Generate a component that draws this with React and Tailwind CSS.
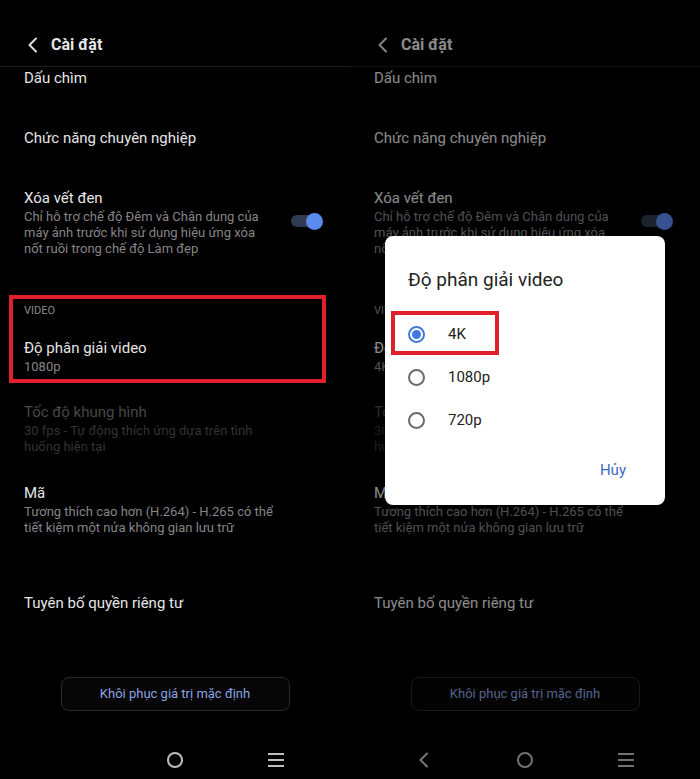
import React from 'react';

const font = { fontFamily: 'Roboto, "Noto Sans", sans-serif' };

const Chevron = ({ className }) => (
  <svg width="12" height="16" viewBox="0 0 12 16" className={className}>
    <path d="M9 1.5 L2.5 8 L9 14.5" fill="none" stroke="currentColor" strokeWidth="2" strokeLinecap="round" strokeLinejoin="round" />
  </svg>
);

const Item = ({ title, desc, mt, titleColor = 'text-[#e6e6e6]', descColor = 'text-[#858585]', children }) => (
  <div className={`flex items-start justify-between pl-[24px] pr-[27px] ${mt}`}>
    <div>
      <div className={`text-[15px] leading-[20px] ${titleColor}`}>{title}</div>
      {desc && <div className={`mt-px text-[13px] leading-[16px] ${descColor}`}>{desc}</div>}
    </div>
    {children}
  </div>
);

const Toggle = () => (
  <div className="relative mt-[25px] h-[16px] w-[32px]">
    <div className="absolute left-0 top-[2px] h-[12px] w-[26px] rounded-full bg-[#2e3b52]" />
    <div className="absolute right-0 top-0 h-[17px] w-[17px] rounded-full bg-[#5a8bef]" />
  </div>
);

const Radio = ({ checked }) =>
  checked ? (
    <div className="flex h-[17px] w-[17px] items-center justify-center rounded-full border-2 border-[#3f78e0]">
      <div className="h-[9px] w-[9px] rounded-full bg-[#3f78e0]" />
    </div>
  ) : (
    <div className="h-[17px] w-[17px] rounded-full border-2 border-[#6a6a6a]" />
  );

const Panel = ({ dialog }) => (
  <div className="relative h-[779px] w-[350px] overflow-hidden bg-black" style={font}>
    {/* header */}
    <div className="flex h-[67px] items-center border-b border-[#1c1c1c] pl-[27px] pt-[24px]">
      <Chevron className="text-[#dddddd]" />
      <span className="ml-[12px] text-[16px] font-bold text-[#e6e6e6]">Cài đặt</span>
    </div>

    <Item title="Dấu chìm" mt="mt-px" />
    <Item title="Chức năng chuyên nghiệp" mt="mt-[40px]" />
    <Item
      title="Xóa vết đen"
      mt="mt-[40px]"
      desc={<>Chỉ hỗ trợ chế độ Đêm và Chân dung của<br />máy ảnh trước khi sử dụng hiệu ứng xóa<br />nốt ruồi trong chế độ Làm đẹp</>}
    >
      <Toggle />
    </Item>

    <div
      className={
        dialog
          ? 'ml-[9px] mt-[38px] w-[317px] border-4 border-transparent pb-[4px] pl-[11px] pt-[5px]'
          : 'ml-[9px] mt-[38px] w-[317px] border-4 border-[#e0212d] pb-[4px] pl-[11px] pt-[5px]'
      }
    >
      <div className="text-[11px] leading-[14px] text-[#8a8a8a]">VIDEO</div>
      <div className="mt-[20px] text-[15px] leading-[20px] text-[#e6e6e6]">Độ phân giải video</div>
      <div className="mt-px text-[13px] leading-[16px] text-[#858585]">{dialog ? '4K' : '1080p'}</div>
    </div>

    <Item
      title="Tốc độ khung hình"
      mt="mt-[19px]"
      titleColor="text-[#484848]"
      descColor="text-[#333333]"
      desc={<>30 fps - Tự động thích ứng dựa trên tình<br />huống hiện tại</>}
    />
    <Item
      title="Mã"
      mt="mt-[28px]"
      desc={<>Tương thích cao hơn (H.264) - H.265 có thể<br />tiết kiệm một nửa không gian lưu trữ</>}
    />
    <Item title="Tuyên bố quyền riêng tư" mt="mt-[57px]" />

    <div className="mx-auto mt-[64px] flex h-[34px] w-[229px] items-center justify-center rounded-[8px] border border-[#2a2a2a] bg-[#060606] text-[13px] text-[#8ca3e3]">
      Khôi phục giá trị mặc định
    </div>

    {/* nav bar */}
    <div className="relative mt-[34px] flex h-[30px] items-center justify-center">
      {dialog && (
        <div className="absolute left-[68px] top-[7px] text-[#c8c8c8]">
          <Chevron />
        </div>
      )}
      <div className="h-[16px] w-[16px] rounded-full border-2 border-[#bdbdbd]" />
      <div className="absolute left-[268px] top-[8px] flex w-[16px] flex-col gap-[4px]">
        <div className="h-[2px] bg-[#bdbdbd]" />
        <div className="h-[2px] bg-[#bdbdbd]" />
        <div className="h-[2px] bg-[#bdbdbd]" />
      </div>
    </div>

    {dialog && (
      <>
        <div className="absolute inset-0 bg-black/40" />
        <div className="absolute left-[35px] top-[236px] h-[269px] w-[280px] rounded-[8px] bg-white">
          <div className="pl-[23px] pt-[31px] text-[19px] leading-[26px] text-[#222222]">Độ phân giải video</div>
          <div className="mt-[20px] flex flex-col">
            {[
              ['4K', true],
              ['1080p', false],
              ['720p', false],
            ].map(([label, checked]) => (
              <div key={label} className="flex h-[43px] items-center pl-[23px]">
                <Radio checked={checked} />
                <span className="ml-[23px] text-[15px] text-[#222222]">{label}</span>
              </div>
            ))}
          </div>
          <div className="mt-[17px] flex justify-end pr-[39px] text-[15px] text-[#3d6bc2]">Hủy</div>
          <div className="absolute left-[6px] top-[75px] h-[44px] w-[108px] border-4 border-[#e0212d]" />
        </div>
      </>
    )}
  </div>
);

export default function App() {
  return (
    <div className="flex h-[779px] w-[700px] bg-black">
      <Panel />
      <Panel dialog />
    </div>
  );
}
